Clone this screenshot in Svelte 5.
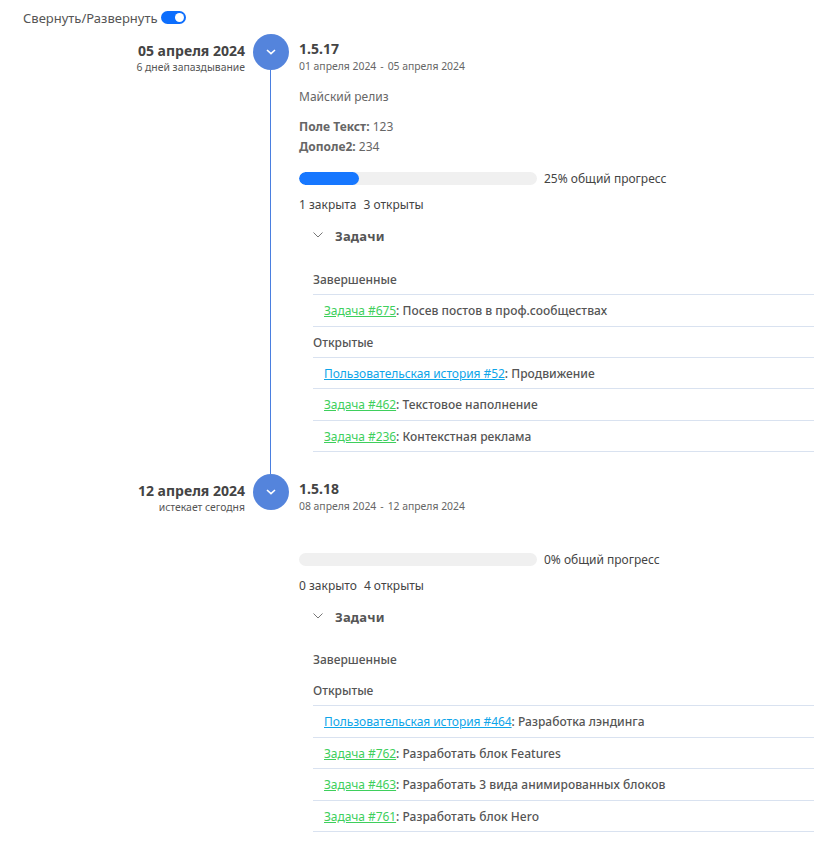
<script>
  const releases = [
    {
      date: '05 апреля 2024',
      note: '6 дней запаздывание',
      version: '1.5.17',
      range: '01 апреля 2024',
      rangeEnd: '05 апреля 2024',
      description: 'Майский релиз',
      fields: [['Поле Текст:', '123'], ['Дополе2:', '234']],
      percent: 25,
      counts: ['1 закрыта', '3 открыты'],
      done: [{ kind: 'link-task', label: 'Задача #675', title: 'Посев постов в проф.сообществах' }],
      open: [
        { kind: 'link-story', label: 'Пользовательская история #52', title: 'Продвижение' },
        { kind: 'link-task', label: 'Задача #462', title: 'Текстовое наполнение' },
        { kind: 'link-task', label: 'Задача #236', title: 'Контекстная реклама' }
      ]
    },
    {
      date: '12 апреля 2024',
      note: 'истекает сегодня',
      version: '1.5.18',
      range: '08 апреля 2024',
      rangeEnd: '12 апреля 2024',
      description: '',
      fields: [],
      percent: 0,
      counts: ['0 закрыто', '4 открыты'],
      done: [],
      open: [
        { kind: 'link-story', label: 'Пользовательская история #464', title: 'Разработка лэндинга' },
        { kind: 'link-task', label: 'Задача #762', title: 'Разработать блок Features' },
        { kind: 'link-task', label: 'Задача #463', title: 'Разработать 3 вида анимированных блоков' },
        { kind: 'link-task', label: 'Задача #761', title: 'Разработать блок Hero' }
      ]
    }
  ];
</script>

<div class="page">
  <div class="toggle-row">
    <span>Свернуть/Развернуть</span>
    <span class="switch"><span class="knob"></span></span>
  </div>

  {#each releases as r, i}
    <section class="release">
      <div class="when">
        <div class="date">{r.date}</div>
        <div class="note">{r.note}</div>
      </div>

      <div class="rail">
        <div class="circle">
          <svg width="10" height="6" viewBox="0 0 10 6"><path d="M1 1l4 3.6L9 1" fill="none" stroke="#fff" stroke-width="1.6" /></svg>
        </div>
        {#if i < releases.length - 1}
          <div class="line"></div>
        {/if}
      </div>

      <div class="body">
        <div class="version">{r.version}</div>
        <div class="range"><span>{r.range}</span><span>-</span><span>{r.rangeEnd}</span></div>

        <div class="description">{r.description}</div>

        {#if r.fields.length}
          <div class="fields">
            {#each r.fields as f}
              <div><b>{f[0]}</b> {f[1]}</div>
            {/each}
          </div>
        {/if}

        <div class="progress-row">
          <div class="track"><div class="fill" style="width: {r.percent}%"></div></div>
          <span>{r.percent}% общий прогресс</span>
        </div>

        <div class="counts"><span>{r.counts[0]}</span><span>{r.counts[1]}</span></div>

        <div class="tasks">
          <div class="tasks-head">
            <svg width="10" height="6" viewBox="0 0 10 6"><path d="M.5.5L5 5l4.500-4.500" fill="none" stroke="#777" stroke-width="1" /></svg>
            <span>Задачи</span>
          </div>

          <div class="group" class:empty={!r.done.length}>Завершенные</div>
          {#each r.done as t}
            <div class="task"><a href="#top" class={t.kind}>{t.label}</a>: {t.title}</div>
          {/each}

          <div class="group">Открытые</div>
          {#each r.open as t}
            <div class="task"><a href="#top" class={t.kind}>{t.label}</a>: {t.title}</div>
          {/each}
        </div>
      </div>
    </section>
  {/each}
</div>

<style>
  :global(body) {
    margin: 0;
    background: #fff;
  }

  .page {
    width: 814px;
    height: 851px;
    overflow: hidden;
    font-family: "Noto Sans", "Open Sans", sans-serif;
    font-size: 12px;
    color: #555;
  }

  .toggle-row {
    display: flex;
    align-items: center;
    gap: 3px;
    height: 34px;
    padding: 1px 0 0 23px;
    box-sizing: border-box;
    color: #555;
    font-size: 13px;
  }

  .switch {
    display: flex;
    justify-content: flex-end;
    align-items: center;
    width: 25px;
    height: 13px;
    border-radius: 7px;
    background: #0d6efd;
    padding: 0 2px;
    box-sizing: border-box;
    margin-top: -1px;
  }

  .knob {
    width: 9px;
    height: 9px;
    border-radius: 50%;
    background: #fff;
  }

  .release {
    display: grid;
    grid-template-columns: 245px 44px 1fr;
    margin-bottom: 22px;
  }

  .when {
    text-align: right;
    padding-top: 8px;
  }

  .date {
    font-size: 14px;
    font-weight: 700;
    line-height: 18px;
    color: #444;
  }

  .note {
    font-size: 10.400px;
    line-height: 14px;
  }

  .rail {
    display: flex;
    flex-direction: column;
    padding-left: 8px;
    margin-bottom: -22px;
  }

  .circle {
    flex: none;
    width: 36px;
    height: 36px;
    border-radius: 50%;
    background: #5484dc;
    display: flex;
    align-items: center;
    justify-content: center;
  }

  .line {
    flex: 1;
    width: 1px;
    margin-left: 17px;
    background: #4a7fe0;
  }

  .body {
    padding-left: 10px;
    min-width: 0;
  }

  .version {
    font-size: 14px;
    font-weight: 700;
    line-height: 18px;
    color: #444;
    margin-top: 6px;
  }

  .range {
    display: flex;
    gap: 4px;
    font-size: 10.400px;
    line-height: 14px;
    color: #666;
    margin-top: 1px;
  }

  .description {
    height: 18px;
    line-height: 18px;
    color: #666;
    margin-top: 15px;
  }

  .description:empty {
    height: 10px;
  }

  .fields {
    margin-top: 11px;
    line-height: 20px;
    color: #666;
  }

  .progress-row {
    display: flex;
    align-items: center;
    gap: 7px;
    margin-top: 11px;
    height: 20px;
    color: #444;
  }

  .track {
    width: 238px;
    height: 13px;
    border-radius: 7px;
    background: #f0f0f0;
    overflow: hidden;
  }

  .fill {
    height: 100%;
    background: #1677ff;
    border-radius: 7px;
  }

  .counts {
    display: flex;
    gap: 7px;
    margin-top: 7px;
    line-height: 20px;
    color: #444;
  }

  .tasks {
    padding-left: 14px;
    margin-top: 5px;
  }

  .tasks-head {
    display: flex;
    align-items: center;
    gap: 12px;
    height: 32px;
    font-size: 13px;
    font-weight: 700;
    color: #555;
  }

  .tasks-head svg {
    margin-top: -3px;
  }

  .tasks-head span {
    letter-spacing: 0.2px;
  }

  .group {
    height: 31px;
    line-height: 32px;
    border-bottom: 1px solid #d9e2f0;
    font-weight: 500;
    box-sizing: border-box;
    color: #555;
  }

  .tasks-head + .group {
    margin-top: 12px;
  }

  .tasks-head + .group.empty {
    margin-top: 11px;
    border-bottom: none;
  }

  .task {
    height: 31.500px;
    line-height: 32px;
    padding-left: 11px;
    border-bottom: 1px solid #d9e2f0;
    box-sizing: border-box;
    font-weight: 500;
    letter-spacing: 0.03px;
    color: #555;
  }

  .link-task,
  .link-story {
    font-weight: 400;
    letter-spacing: -0.06px;
  }

  .link-task {
    color: #3ecf5c;
  }

  .link-story {
    color: #0ea5e9;
  }
</style>
